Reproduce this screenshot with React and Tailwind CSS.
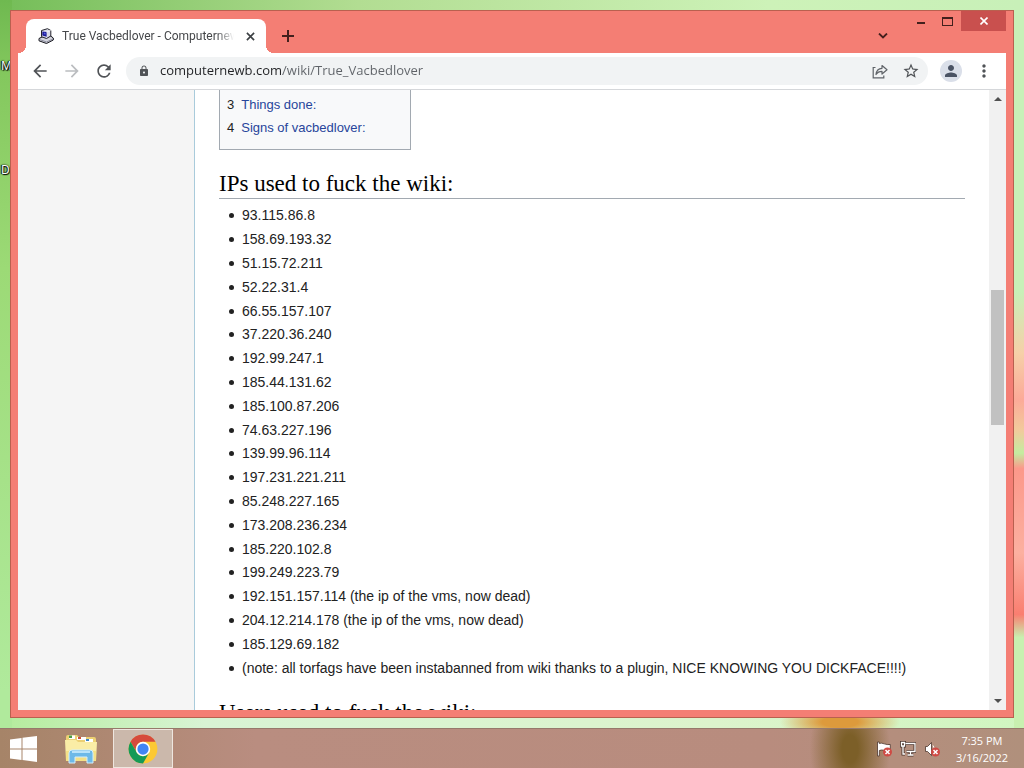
import { MdArrowBack, MdArrowForward, MdRefresh, MdLock, MdStarBorder, MdPerson, MdMoreVert } from 'react-icons/md'

const ENTRIES = [
  '93.115.86.8',
  '158.69.193.32',
  '51.15.72.211',
  '52.22.31.4',
  '66.55.157.107',
  '37.220.36.240',
  '192.99.247.1',
  '185.44.131.62',
  '185.100.87.206',
  '74.63.227.196',
  '139.99.96.114',
  '197.231.221.211',
  '85.248.227.165',
  '173.208.236.234',
  '185.220.102.8',
  '199.249.223.79',
  '192.151.157.114 (the ip of the vms, now dead)',
  '204.12.214.178 (the ip of the vms, now dead)',
  '185.129.69.182',
  '(note: all torfags have been instabanned from wiki thanks to a plugin, NICE KNOWING YOU DICKFACE!!!!)',
]

const TOC = [
  { n: 3, label: 'Things done:' },
  { n: 4, label: 'Signs of vacbedlover:' },
]

function Favicon() {
  return (
    <svg viewBox="0 0 16 16" className="size-4 shrink-0" strokeLinejoin="round">
      <path d="M1 10.500 4 9l8-1.500 3.300 2.500v2L8.500 15.500 1 12.800z" fill="#d4d5de" stroke="#15151c" />
      <path d="M1.500 11.500 8.500 14l6.500-3" fill="none" stroke="#77788a" strokeWidth=".8" />
      <path d="M3.500 2.500 9.500.7l3.300 1.800V8L8.500 10.500l-5-1.800z" fill="#d9dbe8" stroke="#23232c" />
      <path d="M4.300 3.400 8.600 4v4.800l-4.300-1.200z" fill="#1c1a96" />
      <path d="M5.800 4.600 7.600 5v1.600l-1.800-.4z" fill="#5560e8" />
      <path d="M8.600 4l4-1.500" stroke="#f6f6fb" strokeWidth=".9" />
    </svg>
  )
}

function ShareIcon() {
  return (
    <svg viewBox="0 0 16 16" className="size-4" fill="none" stroke="#5f6368" strokeWidth="1.200">
      <path d="M3.500 4.500H1.200v10.300h10.600v-2.300" />
      <path d="M4 11.500c.4-4 2.600-6 6-6.200V2.500L15 6.800l-5 4.200V8.300c-2.800 0-4.500.8-6 3.200z" strokeLinejoin="round" />
    </svg>
  )
}

function ChromeLogo() {
  return (
    <svg viewBox="0 0 48 48" className="size-[30px]">
      <circle cx="24" cy="24" r="23" fill="#fcc934" />
      <path d="M4.080 12.500A23 23 0 0 1 43.920 12.500H24A11.500 11.500 0 0 0 14.040 29.750z" fill="#d64a3c" />
      <path d="M4.080 12.500A23 23 0 0 0 24 47L33.960 29.750A11.500 11.500 0 0 1 14.040 29.750z" fill="#159a57" />
      <circle cx="24" cy="24" r="11.500" fill="#fff" />
      <circle cx="24" cy="24" r="9" fill="#4285f4" />
    </svg>
  )
}

function WindowsLogo() {
  return (
    <svg viewBox="0 0 27 26" className="h-[26px] w-[27px]" fill="#fff">
      <path d="M0 3.600 11.500 2v10.500H0zM12.500 1.800 27 0v12.500H12.500zM0 13.500h11.500V24L0 22.400zM12.500 13.500H27V26l-14.500-1.900z" />
    </svg>
  )
}

function ExplorerIcon() {
  return (
    <svg viewBox="0 0 32 30" className="h-[30px] w-8">
      <path d="M1 3q0-2 2-2h9l2 2h15q2 0 2 2v21H1z" fill="#ecd073" />
      <path d="M4 1.500h6V5H4z" fill="#fff" />
      <path d="M4 1.500h3V4H4z" fill="#4c9a48" />
      <path d="M12 3h9v3h-9zM20 5h8v3h-8z" fill="#fff" />
      <path d="M13 3h3v2h-3z" fill="#d0503a" />
      <path d="M21 5h3v2h-3z" fill="#3d87c5" />
      <path d="M0 6h11l2 2h19L31 27H1z" fill="#faeda6" />
      <path d="M1 17h30v10H1z" fill="#f4e086" />
      <path d="M4 29V19q0-3 3-3h18q3 0 3 3v10h-6v-6H10v6z" fill="#6db9e8" stroke="#d3eefc" />
      <path d="M7 18h18" stroke="#b9e3fa" strokeWidth="2" />
    </svg>
  )
}

function ErrorBadge() {
  return (
    <>
      <circle cx="11.500" cy="11" r="4.500" fill="#cf4a44" />
      <path d="m9.500 9 4 4m0-4-4 4" stroke="#fff" strokeWidth="1.500" />
    </>
  )
}

function FlagIcon() {
  return (
    <svg viewBox="0 0 16 16" className="size-4">
      <path d="M1.500 1v14h1.800V9.500c3-1.500 6 1 11-.5V3.500C10 4.500 6 1 3.300 2.500V1z" fill="#fff" stroke="#4b352c" strokeWidth=".8" />
      <ErrorBadge />
    </svg>
  )
}

function NetworkIcon() {
  return (
    <svg viewBox="0 0 16 16" className="size-4" fill="none">
      <path d="M5.500 2.500H15v8H6.500M10.500 10.500v3M7.500 14h6M1.500 1.500h3V5h-3zM3 5v8h2" stroke="#4b352c" strokeWidth="3" />
      <path d="M5.500 2.500H15v8H6.500M10.500 10.500v3M7.500 14h6M1.500 1.500h3V5h-3zM3 5v8h2" stroke="#fff" strokeWidth="1.300" />
    </svg>
  )
}

function SpeakerIcon() {
  return (
    <svg viewBox="0 0 16 16" className="size-4">
      <path d="M1.500 5.500h2l4-4v13l-4-4h-2z" fill="#fff" stroke="#4b352c" strokeWidth=".8" />
      <path d="M9 4.500q1.500 2 .5 4" fill="none" stroke="#fff" />
      <ErrorBadge />
    </svg>
  )
}

function TitleBar() {
  return (
    <div className="flex h-[42px] justify-between">
      <div className="flex items-end">
        <span className="size-2 bg-[radial-gradient(circle_at_0_0,transparent_8px,#fff_8px)]" />
        <div className="flex h-[34px] w-60 items-center gap-2 rounded-t-lg bg-white pr-2 pl-3">
          <Favicon />
          <span className="min-w-0 flex-1 overflow-hidden font-[Roboto,sans-serif] text-[12px] whitespace-nowrap text-[#45474a] [mask-image:linear-gradient(90deg,#000_90%,transparent)]">
            True Vacbedlover - Computernewb Wiki
          </span>
          <button type="button" aria-label="Close tab" className="grid size-4 place-items-center">
            <svg viewBox="0 0 10 10" className="size-[9px]" stroke="#3c4043" strokeWidth="1.800">
              <path d="m1 1 8 8m0-8-8 8" />
            </svg>
          </button>
        </div>
        <span className="size-2 bg-[radial-gradient(circle_at_100%_0,transparent_8px,#fff_8px)]" />
        <button type="button" aria-label="New tab" className="grid h-[34px] w-7 place-items-center">
          <svg viewBox="0 0 12 12" className="size-3" stroke="#43201d" strokeWidth="2">
            <path d="M6 0v12M0 6h12" />
          </svg>
        </button>
      </div>
      <div className="flex items-start">
        <button type="button" aria-label="Search tabs" className="mr-3 grid h-[34px] w-6 place-items-center self-end">
          <svg viewBox="0 0 10 6" className="h-1.5 w-2.5" fill="none" stroke="#43201d" strokeWidth="1.800">
            <path d="m1 .5 4 4 4-4" />
          </svg>
        </button>
        <button type="button" aria-label="Minimize" className="grid h-5 w-[27px] place-items-center">
          <span className="mt-1 h-0.5 w-2 bg-[#43201d]" />
        </button>
        <button type="button" aria-label="Maximize" className="grid h-5 w-[27px] place-items-center">
          <span className="h-[9px] w-[11px] border border-t-2 border-[#43201d]" />
        </button>
        <button type="button" aria-label="Close" className="grid h-5 w-[45px] place-items-center bg-[#c9504e]">
          <svg viewBox="0 0 8 8" className="size-2" stroke="#fff" strokeWidth="1.600">
            <path d="m.5.5 7 7m0-7-7 7" />
          </svg>
        </button>
      </div>
    </div>
  )
}

function Toolbar() {
  return (
    <div className="flex h-[37px] items-center border-b border-[#d5d7da] bg-white px-3 text-[#505357]">
      <div className="flex gap-3">
        <button type="button" aria-label="Back"><MdArrowBack className="size-5" /></button>
        <button type="button" aria-label="Forward" className="text-[#bbbdc0]"><MdArrowForward className="size-5" /></button>
        <button type="button" aria-label="Reload"><MdRefresh className="size-5" /></button>
      </div>
      <div className="ml-3 flex h-7 flex-1 items-center rounded-full bg-[#f1f3f4] pr-2 pl-3">
        <MdLock className="size-3" />
        <input
          aria-label="Address"
          defaultValue="computernewb.com/wiki/True_Vacbedlover"
          className="ml-[10px] min-w-0 flex-1 bg-[linear-gradient(90deg,#202124_122px,#5f6368_122px)] bg-clip-text text-[13px] text-transparent outline-none"
        />
        <div className="flex items-center gap-[14px]">
          <button type="button" aria-label="Share"><ShareIcon /></button>
          <button type="button" aria-label="Bookmark"><MdStarBorder className="size-[18px]" /></button>
        </div>
      </div>
      <button type="button" aria-label="Profile" className="ml-3 grid size-[22px] place-items-center rounded-full bg-[#dadfe9]">
        <MdPerson className="size-[18px] text-[#4a5364]" />
      </button>
      <button type="button" aria-label="Menu" className="ml-3"><MdMoreVert className="size-5" /></button>
    </div>
  )
}

function Scrollbar() {
  return (
    <div className="flex w-[17px] shrink-0 flex-col items-center bg-[#f1f1f1]">
      <svg viewBox="0 0 8 4" className="mt-[7px] h-1 w-2" fill="#505050"><path d="M0 4l4-4 4 4z" /></svg>
      <div className="flex min-h-0 w-full flex-1 flex-col items-center">
        <div className="grow-[189]" />
        <div className="w-[13px] grow-[135] bg-[#c1c1c1]" />
        <div className="grow-[274]" />
      </div>
      <svg viewBox="0 0 8 4" className="mb-[7px] h-1 w-2" fill="#505050"><path d="M0 0l4 4 4-4z" /></svg>
    </div>
  )
}

function Heading({ children }) {
  return (
    <h2 className="h-[30px] border-b border-[#a2a9b1] font-['Liberation_Serif',serif] text-[23px] leading-[30px] text-black">
      {children}
    </h2>
  )
}

function Page() {
  return (
    <div className="flex min-h-0 flex-1 bg-white font-['Liberation_Sans',sans-serif] text-[14px] text-[#222]">
      <aside className="w-[177px] shrink-0 border-r border-[#a9cbdb] bg-[#f5f5f5]" />
      <article className="min-w-0 flex-1 overflow-hidden px-6">
        <nav className="h-[60px] w-48 border border-t-0 border-[#a2a9b1] bg-[#f8f9fa] px-[7px] pt-[3px] text-[13px]">
          {TOC.map(item => (
            <div key={item.n} className="flex h-[23px] items-center gap-[7px]">
              <span>{item.n}</span>
              <a href="#" className="text-[#27459b]">{item.label}</a>
            </div>
          ))}
        </nav>
        <div className="mt-[19px]">
          <Heading>IPs used to fuck the wiki:</Heading>
        </div>
        <ul className="mt-[5px] grid h-[476px] auto-rows-fr pl-[10px]">
          {ENTRIES.map(entry => (
            <li key={entry} className="flex items-center gap-2 whitespace-nowrap">
              <span className="size-[5px] rounded-full bg-[#222]" />
              {entry}
            </li>
          ))}
        </ul>
        <div className="mt-[18px]">
          <Heading>Users used to fuck the wiki:</Heading>
        </div>
      </article>
      <Scrollbar />
    </div>
  )
}

function Taskbar() {
  return (
    <footer className="flex h-10 shrink-0 items-center border-t border-[#96796b] bg-[radial-gradient(40px_70px_at_850px_20px,#7c5f28_20%,transparent),linear-gradient(90deg,#a68468,#b98d80_25%,#b88c7e_75%,#b0907c)]">
      <button type="button" aria-label="Start" className="ml-[10px]"><WindowsLogo /></button>
      <button type="button" aria-label="File Explorer" className="ml-7"><ExplorerIcon /></button>
      <button type="button" aria-label="Google Chrome" className="ml-4 grid h-[39px] w-[60px] place-items-center border border-[#eee6df] bg-[#cbb8ab]">
        <ChromeLogo />
      </button>
      <div className="ml-auto flex gap-2">
        <FlagIcon />
        <NetworkIcon />
        <SpeakerIcon />
      </div>
      <div className="mx-4 text-center text-[11px] leading-[17px] text-white">
        <div>7:35 PM</div>
        <div>3/16/2022</div>
      </div>
    </footer>
  )
}

function DesktopLabels() {
  return (
    <div className="absolute top-[58px] left-px flex flex-col gap-[88px] text-[12px] leading-4 text-white [text-shadow:0_0_2px_#000,1px_1px_1px_#000,-1px_0_1px_#000]">
      <span>M</span>
      <span>D</span>
    </div>
  )
}

export default function App() {
  return (
    <div className="relative flex h-screen flex-col overflow-hidden font-['Open_Sans',sans-serif] [background:radial-gradient(60px_18px_at_840px_722px,#dd9a3c_30%,transparent),linear-gradient(#c8f0b8_38%,#f6d0a8_46%,#fcaa98_52%,#f2ca9c_56%,#c4eca0_59%,#fc988a_61%,#fcb0a0_72%,#fa7e70_80%,#c8f0b0_83%)_right_top/10px_100%_no-repeat,linear-gradient(#6fb950,#84c85e_10%,#9cda76_35%,#b0ea9c_90%)_left_top/12px_100%_no-repeat,linear-gradient(90deg,#74bd58,#b2dd92_35%,#cdf2b8_75%,#c8f0b8)_left_top/100%_12px_no-repeat,linear-gradient(90deg,#b4ec9c,#d8f4d4_20%,#dcf4cc_70%,#d0f6c0)]">
      <DesktopLabels />
      <main className="flex min-h-0 flex-1 flex-col p-[10px]">
        <section className="relative flex min-h-0 flex-1 flex-col border border-[#b9604f] bg-[#f47e74] px-[7px] pb-[7px]">
          <TitleBar />
          <Toolbar />
          <Page />
        </section>
      </main>
      <Taskbar />
    </div>
  )
}
